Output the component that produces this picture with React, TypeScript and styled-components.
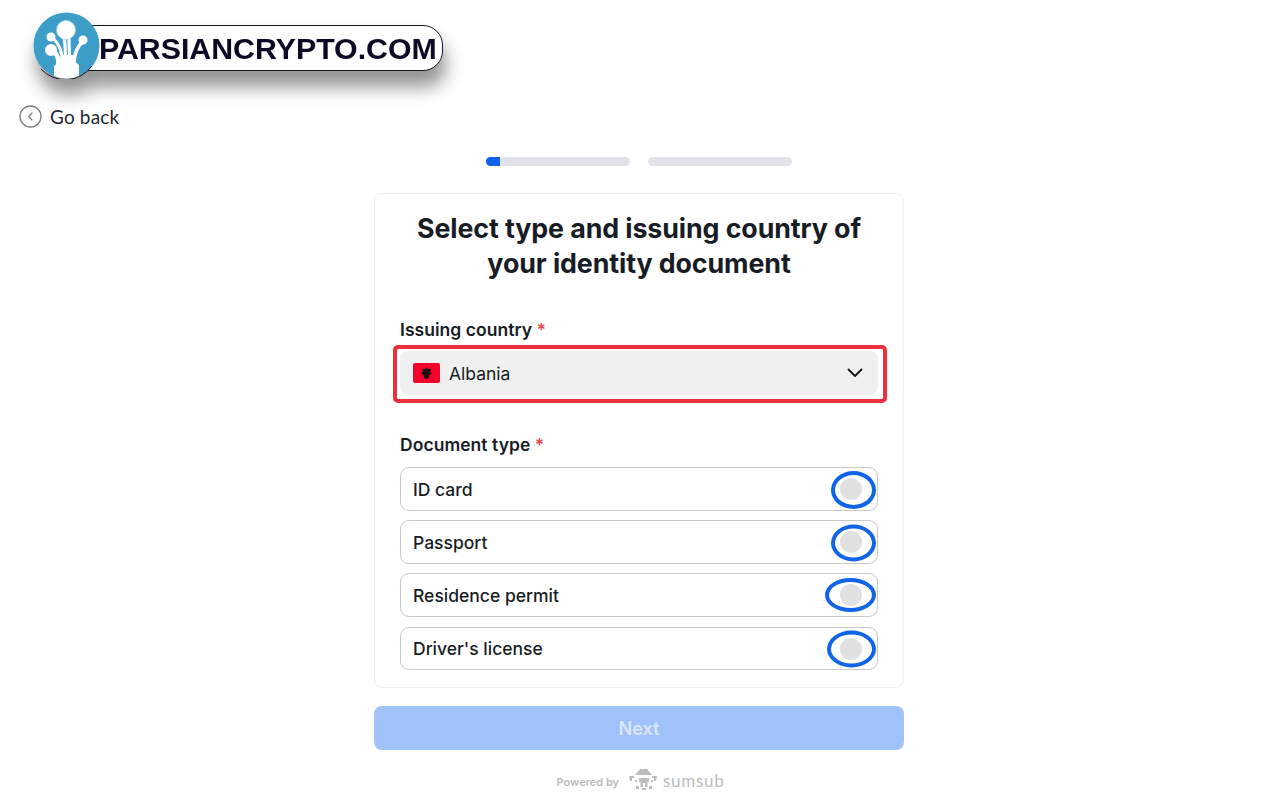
import styled, { createGlobalStyle } from 'styled-components';

const GlobalStyle = createGlobalStyle`
  html, body {
    margin: 0;
    padding: 0;
    background: #ffffff;
    font-family: 'Inter', 'Liberation Sans', sans-serif;
  }
`;

const Page = styled.div`
  width: 1280px;
  height: 800px;
  overflow: hidden;
  display: flex;
  flex-direction: column;
`;

const Header = styled.header`
  display: flex;
  flex-direction: column;
  align-items: flex-start;
  padding: 12px 0 0 19px;
`;

const Logo = styled.div`
  display: flex;
  align-items: center;
  margin-left: 14px;
  height: 67px;
  filter: drop-shadow(3px 16px 9px rgba(0, 0, 0, 0.42));
`;

const LogoBadge = styled.svg`
  width: 67px;
  height: 67px;
  flex: none;
  position: relative;
  z-index: 1;
`;

const LogoPill = styled.div`
  width: 375px;
  height: 46px;
  box-sizing: border-box;
  margin: 4px 0 0 -32px;
  padding: 2px 0 0 30px;
  display: flex;
  align-items: center;
  background: #ffffff;
  border: 1px solid #14141f;
  border-radius: 0 20px 20px 0;
  font-family: 'Liberation Sans', Arial, sans-serif;
  font-weight: 700;
  font-size: 30.3px;
  color: #0a0a24;
  white-space: nowrap;
`;

const BackLink = styled.a`
  display: flex;
  align-items: center;
  gap: 8px;
  margin-top: 26px;
  height: 23px;
  font-family: 'Lato', sans-serif;
  font-size: 19px;
  letter-spacing: 0.15px;
  color: #25282f;
`;

const Main = styled.main`
  display: flex;
  flex-direction: column;
  align-items: center;
  width: 530px;
  margin: 29px 0 0 374px;
`;

const Steps = styled.div`
  display: flex;
  gap: 18px;
  margin-bottom: 27px;
`;

const Step = styled.div`
  width: 144px;
  height: 9px;
  border-radius: 5px;
  background: #e0e2e8;
  overflow: hidden;
`;

const StepFill = styled.div<{ $width: number }>`
  width: ${(p) => p.$width}px;
  height: 100%;
  background: #1162ee;
`;

const Card = styled.section`
  width: 530px;
  height: 495px;
  box-sizing: border-box;
  padding: 17px 25px 0;
  border: 1px solid #eceef0;
  border-radius: 8px;
  background: #ffffff;
`;

const Title = styled.h1`
  margin: 0;
  font-size: 26.8px;
  line-height: 35px;
  font-weight: 700;
  letter-spacing: -0.1px;
  text-align: center;
  color: #181c25;
`;

const Label = styled.div<{ $top: number }>`
  margin-top: ${(p) => p.$top}px;
  font-size: 17.5px;
  line-height: 24px;
  font-weight: 600;
  letter-spacing: 0.05px;
  color: #181c25;
`;

const Required = styled.span`
  color: #e5484d;
`;

const SelectOutline = styled.div`
  margin: 3px -9px 0 -7px;
  padding: 2px 5px 4px 3px;
  border: 4px solid #ee2f3c;
  border-radius: 5px;
`;

const Select = styled.div`
  display: flex;
  align-items: center;
  height: 44px;
  box-sizing: border-box;
  padding: 0 14px 0 13px;
  gap: 9px;
  border-radius: 8px;
  background: #eff0f0;
  font-size: 17.5px;
  color: #181c25;
`;

const SelectValue = styled.span`
  flex: 1;
`;

const Options = styled.div`
  display: flex;
  flex-direction: column;
  gap: 9px;
  margin-top: 10px;
`;

const Option = styled.div`
  position: relative;
  height: 44px;
  box-sizing: border-box;
  display: flex;
  align-items: center;
  justify-content: space-between;
  padding: 0 15px 0 12px;
  border: 1.5px solid #c9c9c9;
  border-radius: 9px;
  font-size: 17.5px;
  font-weight: 500;
  color: #181c25;

  &:last-child {
    margin-top: 1px;
    height: 43px;
  }
`;

const Radio = styled.span`
  width: 22px;
  height: 22px;
  border-radius: 50%;
  background: #e1e1e1;
`;

/* hand drawn marker over each radio */
const Ring = styled.span<{ $w: number; $h: number; $right: number; $shift: number }>`
  position: absolute;
  top: calc(50% + ${(p) => p.$shift}px);
  right: ${(p) => p.$right}px;
  width: ${(p) => p.$w}px;
  height: ${(p) => p.$h}px;
  box-sizing: border-box;
  transform: translateY(-50%);
  border: 4px solid #1064e8;
  border-radius: 50%;
`;

const NextButton = styled.button`
  width: 530px;
  height: 44px;
  margin-top: 18px;
  flex: none;
  border: none;
  border-radius: 8px;
  background: #a0c2fb;
  color: #dbe7fd;
  font-family: 'Inter', sans-serif;
  font-size: 18px;
  font-weight: 600;
`;

const Footer = styled.footer`
  display: flex;
  align-items: center;
  height: 26px;
  margin: 17px 0 0 3px;
  color: #babcc0;
`;

const PoweredBy = styled.span`
  margin-top: 4px;
  font-size: 11px;
  font-weight: 600;
`;

const SumsubMark = styled.svg`
  width: 28px;
  height: 22px;
  margin: 0 6px 0 10px;
`;

const SumsubName = styled.span`
  font-family: 'Lato', sans-serif;
  font-size: 17px;
  font-weight: 400;
  letter-spacing: 0.7px;
`;

const rows = [
  { label: 'ID card', w: 45, h: 38, right: 1, shift: 1 },
  { label: 'Passport', w: 45, h: 37, right: 1, shift: 1 },
  { label: 'Residence permit', w: 51, h: 34, right: 1, shift: 0 },
  { label: "Driver's license", w: 49, h: 37, right: 1, shift: 0 },
];

export default function App() {
  return (
    <Page>
      <GlobalStyle />
      <Header>
        <Logo>
          <LogoBadge viewBox="0 0 67 67">
            <circle cx="33.5" cy="33.5" r="33" fill="#3b9dc8" />
            <path d="M8 57 A33 33 0 0 0 59 54" fill="none" stroke="#14141f" strokeWidth="1" />
            <g fill="none" stroke="#ffffff" strokeLinecap="round">
              <path d="M25 54 Q27 42 18 38" strokeWidth="4.5" />
              <path d="M29 50 Q30 36 20 26" strokeWidth="3" />
              <path d="M32 50 Q33 36 31 25" strokeWidth="3.2" />
              <path d="M37 50 Q36 36 36 26" strokeWidth="3.2" />
              <path d="M41 52 Q41 38 50 29" strokeWidth="3.6" />
            </g>
            <path d="M21 54 Q27 50 29 43 H40 Q41 50 46 53 V64 Q40 66.5 33.5 66.5 Q27 66.5 21 64 Z" fill="#ffffff" />
            <circle cx="33" cy="18" r="9.5" fill="#ffffff" stroke="#a9d3e6" strokeWidth="0.8" />
            <circle cx="18" cy="25" r="4.5" fill="#ffffff" />
            <circle cx="18" cy="38" r="6" fill="#ffffff" />
            <circle cx="50" cy="28" r="4.5" fill="#ffffff" />
          </LogoBadge>
          <LogoPill>PARSIANCRYPTO.COM</LogoPill>
        </Logo>
        <BackLink>
          <svg width="23" height="23" viewBox="0 0 23 23" fill="none">
            <circle cx="11.5" cy="11.5" r="10.5" stroke="#7c8088" strokeWidth="1.3" />
            <path d="M13 8 L9.8 11.5 L13 15" stroke="#7c8088" strokeWidth="1.3" strokeLinecap="round" strokeLinejoin="round" />
          </svg>
          Go back
        </BackLink>
      </Header>
      <Main>
        <Steps>
          <Step>
            <StepFill $width={14} />
          </Step>
          <Step />
        </Steps>
        <Card>
          <Title>
            Select type and issuing country of
            <br />
            your identity document
          </Title>
          <Label $top={37}>
            Issuing country <Required>*</Required>
          </Label>
          <SelectOutline>
            <Select>
              <svg width="27" height="20" viewBox="0 0 27 20">
                <rect width="27" height="20" rx="2" fill="#f5002d" />
                <path d="M13.5 4 L15 6 L18 6 L17 9 L19 10 L16.5 12 L15.5 15 L13.5 16.5 L11.5 15 L10.5 12 L8 10 L10 9 L9 6 L12 6 Z" fill="#1a1012" />
              </svg>
              <SelectValue>Albania</SelectValue>
              <svg width="18" height="18" viewBox="0 0 18 18" fill="none">
                <path d="M2.5 5.5 L9 12 L15.5 5.5" stroke="#15181f" strokeWidth="1.9" strokeLinecap="round" strokeLinejoin="round" />
              </svg>
            </Select>
          </SelectOutline>
          <Label $top={30}>
            Document type <Required>*</Required>
          </Label>
          <Options>
            {rows.map((row) => (
              <Option key={row.label}>
                {row.label}
                <Radio />
                <Ring $w={row.w} $h={row.h} $right={row.right} $shift={row.shift} />
              </Option>
            ))}
          </Options>
        </Card>
        <NextButton>Next</NextButton>
        <Footer>
          <PoweredBy>Powered by</PoweredBy>
          <SumsubMark viewBox="0 0 28 22" fill="#babcc0">
            <path d="M11 0 H18 L23 6 H6 Z" />
            <path d="M0 7 H5 V9 H3 L3 12 H1 Z M23 7 H28 L27 12 H25 V9 H23 Z" />
            <path d="M10 9 H20 V13 H18.5 V18 H16 V14 H14 V18 H11.5 V13 H10 Z" />
            <path d="M6 11 H8 V13 H6 Z M22 11 H24 V13 H22 Z M7 17 H10 V20 H7 Z M20 17 H23 V20 H20 Z M13 19 H17 V21 H13 Z" />
          </SumsubMark>
          <SumsubName>sumsub</SumsubName>
        </Footer>
      </Main>
    </Page>
  );
}
